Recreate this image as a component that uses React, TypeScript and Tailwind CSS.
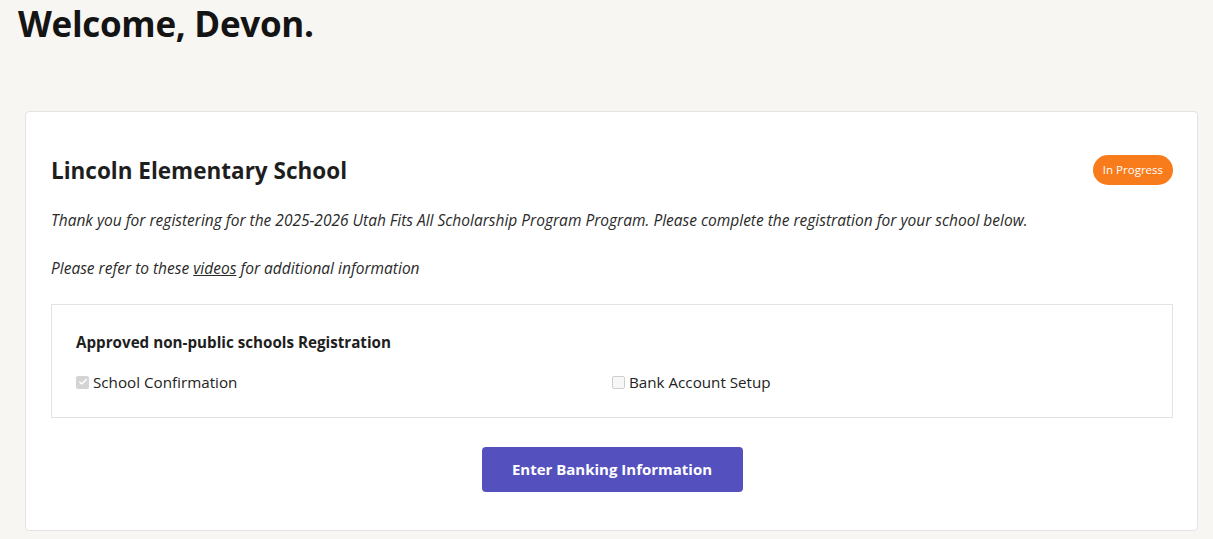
import { Check } from "lucide-react";

const App = () => {
  return (
    <div
      className="min-h-[539px] w-full bg-[#f7f6f3] text-[#1a1a1a]"
      style={{ fontFamily: '"Open Sans", "Noto Sans", sans-serif' }}
    >
      <div className="px-[18px] pt-[2px]">
        <h1 className="text-[35px] font-bold leading-[44px] tracking-[-0.3px] text-[#141414]">
          Welcome, Devon.
        </h1>
      </div>
      <div className="pl-[25px] pr-[15px] pt-[65px] pb-[8px]">
        <div className="rounded-[4px] border border-[#e3e3e3] bg-white pl-[25px] pr-[24px] pt-[42px] pb-[38px]">
          <div className="flex items-center justify-between">
            <h2 className="text-[22.5px] font-bold leading-[34px] text-[#1e1e1e]">
              Lincoln Elementary School
            </h2>
            <span className="-mt-[3px] rounded-full bg-[#f97c1c] px-[10px] py-[6px] text-[11.5px] leading-[18px] text-white">
              In Progress
            </span>
          </div>
          <p className="mt-[20px] text-[15.5px] italic leading-[24px] text-[#2a2a2a]">
            Thank you for registering for the 2025-2026 Utah Fits All Scholarship Program Program. Please
            complete the registration for your school below.
          </p>
          <p className="mt-[24px] text-[15.5px] italic leading-[24px] text-[#2a2a2a]">
            Please refer to these{" "}
            <a href="#" className="underline">
              videos
            </a>{" "}
            for additional information
          </p>
          <div className="mt-[24px] border border-[#e3e3e3] px-[24px] pt-[26px] pb-[24px]">
            <h3 className="text-[15.2px] font-bold leading-[22px] text-[#1e1e1e]">
              Approved non-public schools Registration
            </h3>
            <div className="mt-[18px] grid grid-cols-2">
              <label className="flex items-center gap-[4px] text-[15.2px] leading-[22px] text-[#222]">
                <span className="flex h-[13px] w-[13px] items-center justify-center rounded-[2px] bg-[#d4d4d4]">
                  <Check size={10} strokeWidth={3.5} color="#ffffff" />
                </span>
                School Confirmation
              </label>
              <label className="flex items-center gap-[4px] text-[15.2px] leading-[22px] text-[#222]">
                <span className="h-[13px] w-[13px] rounded-[2px] border border-[#cfcfcf] bg-[#f7f7f7]" />
                Bank Account Setup
              </label>
            </div>
          </div>
          <div className="mt-[29px] flex justify-center">
            <button className="h-[45px] w-[261px] rounded-[4px] bg-[#5451bf] text-[15px] font-bold text-white">
              Enter Banking Information
            </button>
          </div>
        </div>
      </div>
    </div>
  );
};

export default App;
